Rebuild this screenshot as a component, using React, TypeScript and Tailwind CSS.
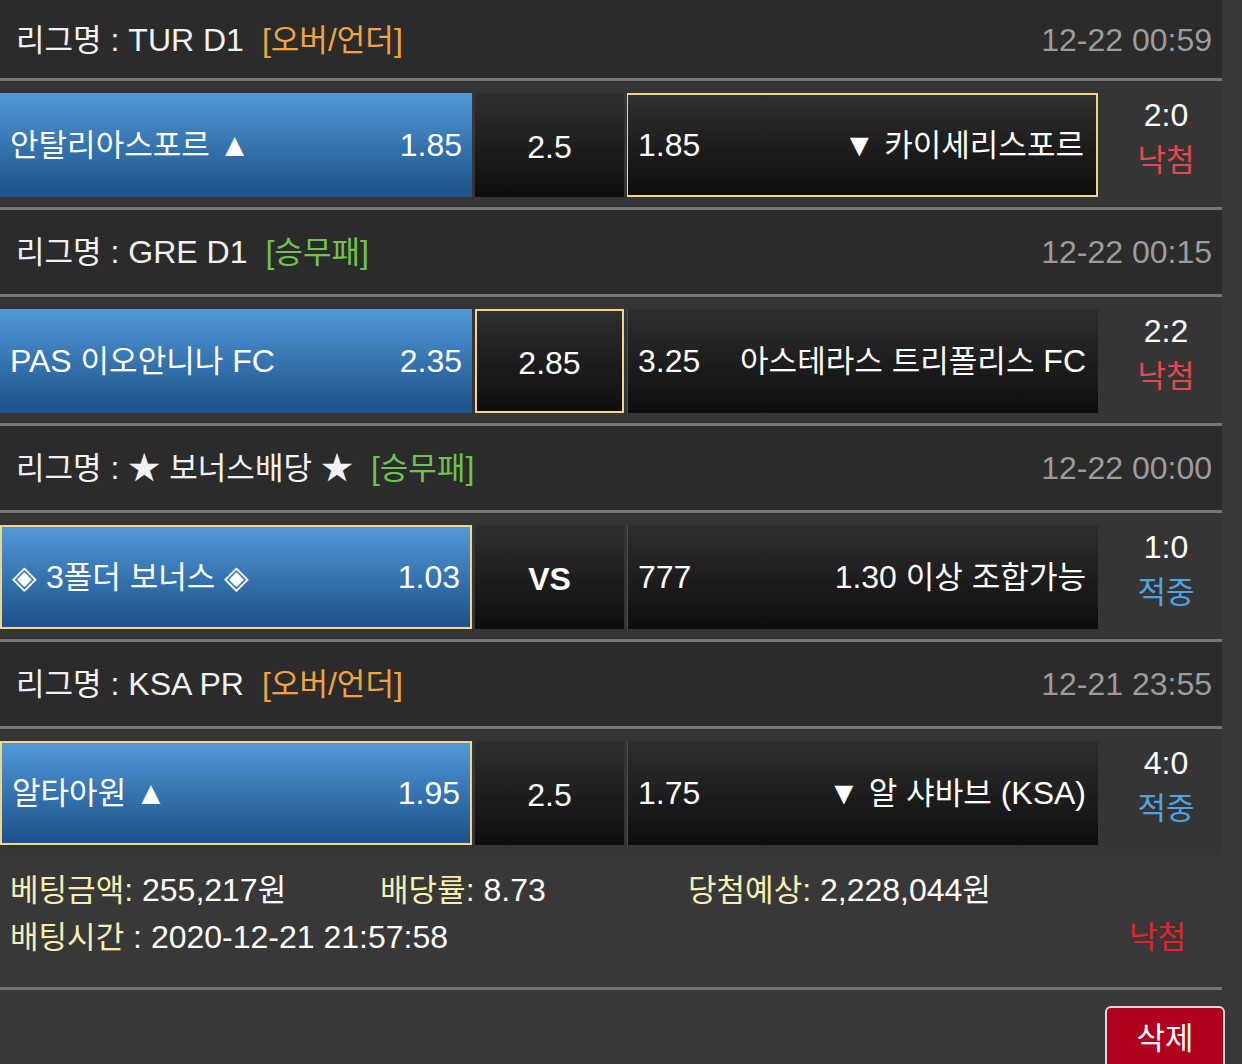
import React from 'react';

const FONT = '[font-family:"Liberation_Sans","Noto_Sans_CJK_KR",sans-serif]';

// Hangul runs render a touch narrower than Latin in the original font
function K({ text }: { text: string }) {
  const parts = text.split(/([\uAC00-\uD7A3\u3131-\u318E]+)/);
  return (
    <>
      {parts.map((p, i) =>
        /[\uAC00-\uD7A3\u3131-\u318E]/.test(p) ? (
          <span key={i} className="text-[0.97em]">
            {p}
          </span>
        ) : (
          <span key={i}>{p}</span>
        )
      )}
    </>
  );
}

type Match = {
  league: string;
  tag: string;
  tagColor: 'orange' | 'green';
  time: string;
  home: string;
  homeOdds: string;
  mid: string;
  midBold?: boolean;
  awayOdds: string;
  away: string;
  pick: 'home' | 'mid' | 'away';
  score: string;
  result: '낙첨' | '적중';
};

const matches: Match[] = [
  {
    league: 'TUR D1',
    tag: '[오버/언더]',
    tagColor: 'orange',
    time: '12-22 00:59',
    home: '안탈리아스포르 ▲',
    homeOdds: '1.85',
    mid: '2.5',
    awayOdds: '1.85',
    away: '▼ 카이세리스포르',
    pick: 'away',
    score: '2:0',
    result: '낙첨',
  },
  {
    league: 'GRE D1',
    tag: '[승무패]',
    tagColor: 'green',
    time: '12-22 00:15',
    home: 'PAS 이오안니나 FC',
    homeOdds: '2.35',
    mid: '2.85',
    awayOdds: '3.25',
    away: '아스테라스 트리폴리스 FC',
    pick: 'mid',
    score: '2:2',
    result: '낙첨',
  },
  {
    league: '★ 보너스배당 ★',
    tag: '[승무패]',
    tagColor: 'green',
    time: '12-22 00:00',
    home: '◈ 3폴더 보너스 ◈',
    homeOdds: '1.03',
    mid: 'VS',
    midBold: true,
    awayOdds: '777',
    away: '1.30 이상 조합가능',
    pick: 'home',
    score: '1:0',
    result: '적중',
  },
  {
    league: 'KSA PR',
    tag: '[오버/언더]',
    tagColor: 'orange',
    time: '12-21 23:55',
    home: '알타아원 ▲',
    homeOdds: '1.95',
    mid: '2.5',
    awayOdds: '1.75',
    away: '▼ 알 샤바브 (KSA)',
    pick: 'home',
    score: '4:0',
    result: '적중',
  },
];

function LeagueHeader({ m, first }: { m: Match; first: boolean }) {
  return (
    <div
      className={`${first ? 'h-[81px] pt-[2px]' : 'h-[87px]'} flex items-center justify-between bg-[#2b2b2b] border-b-[3px] border-[#747474] pl-[16px] pr-[10px]`}
    >
      <div className="text-[#f2f2f2] whitespace-nowrap">
        <K text={`리그명 : ${m.league}`} />
        <span className={`ml-[18px] ${m.tagColor === 'orange' ? 'text-[#f0a441]' : 'text-[#6fc24e]'}`}>
          <K text={m.tag} />
        </span>
      </div>
      <div className="text-[#9c9c9c]">{m.time}</div>
    </div>
  );
}

function MatchRow({ m, last }: { m: Match; last: boolean }) {
  const sel = 'border-2 border-[#f2d58a]';
  return (
    <div
      className={`flex bg-[#353535] pt-[12px] pb-[10px] ${last ? 'h-[126px]' : 'h-[129px] border-b-[3px] border-[#747474]'}`}
    >
      <div className="grid grid-cols-[472px_149px_471px] gap-x-[3px] h-[104px]">
        <div
          className={`flex items-center justify-between px-[10px] bg-linear-to-b from-[#5199d8] to-[#1c5189] text-white ${m.pick === 'home' ? sel : ''}`}
        >
          <span className="whitespace-nowrap">
            <K text={m.home} />
          </span>
          <span>{m.homeOdds}</span>
        </div>
        <div
          className={`flex items-center justify-center bg-linear-to-b from-[#2f2f2f] to-[#0e0e0e] text-white ${m.midBold ? 'font-bold' : ''} ${m.pick === 'mid' ? sel : ''}`}
        >
          <span className="pt-[4px]">{m.mid}</span>
        </div>
        <div
          className={`flex items-center justify-between pl-[10px] pr-[12px] bg-linear-to-b from-[#2f2f2f] to-[#0e0e0e] text-white border-l border-[#4a4a4a] ${m.pick === 'away' ? sel : ''}`}
        >
          <span>{m.awayOdds}</span>
          <span className="whitespace-nowrap">
            <K text={m.away} />
          </span>
        </div>
      </div>
      <div className="w-[124px] pl-[12px] flex flex-col items-center justify-center pb-[14px] leading-[45px]">
        <span className="text-white">{m.score}</span>
        <span className={m.result === '낙첨' ? 'text-[#e6464f]' : 'text-[#4fa3e2]'}>
          <K text={m.result} />
        </span>
      </div>
    </div>
  );
}

export default function App() {
  return (
    <div className={`min-h-screen w-[1242px] bg-[#383838] ${FONT} text-[32px] leading-none overflow-hidden`}>
      <div className="w-[1222px]">
        {matches.map((m, i) => (
          <div key={i}>
            <LeagueHeader m={m} first={i === 0} />
            <MatchRow m={m} last={i === matches.length - 1} />
          </div>
        ))}

        {/* Summary */}
        <div className="h-[135px] border-b-[3px] border-[#747474] pt-[12px] pl-[10px] pr-[36px] leading-[46px]">
          <div className="flex">
            <div className="w-[370px] whitespace-nowrap">
              <span className="text-[#f6efb0]"><K text="베팅금액:" /></span>
              <span className="text-white"> 255,217<K text="원" /></span>
            </div>
            <div className="w-[308px] whitespace-nowrap">
              <span className="text-[#f6efb0]"><K text="배당률:" /></span>
              <span className="text-white"> 8.73</span>
            </div>
            <div className="whitespace-nowrap">
              <span className="text-[#f6efb0]"><K text="당첨예상:" /></span>
              <span className="text-white"> 2,228,044<K text="원" /></span>
            </div>
          </div>
          <div className="flex justify-between">
            <div className="whitespace-nowrap">
              <span className="text-[#f6efb0]"><K text="배팅시간" /></span>
              <span className="text-white"> : 2020-12-21 21:57:58</span>
            </div>
            <span className="text-[#e3222a]">
              <K text="낙첨" />
            </span>
          </div>
        </div>
      </div>

      {/* Footer */}
      <div className="flex justify-end pt-[16px] pr-[17px]">
        <button className="w-[120px] h-[64px] rounded-[6px] border-2 border-[#d9d9d9] bg-[#b2001f] text-white leading-none">
          <K text="삭제" />
        </button>
      </div>
    </div>
  );
}
